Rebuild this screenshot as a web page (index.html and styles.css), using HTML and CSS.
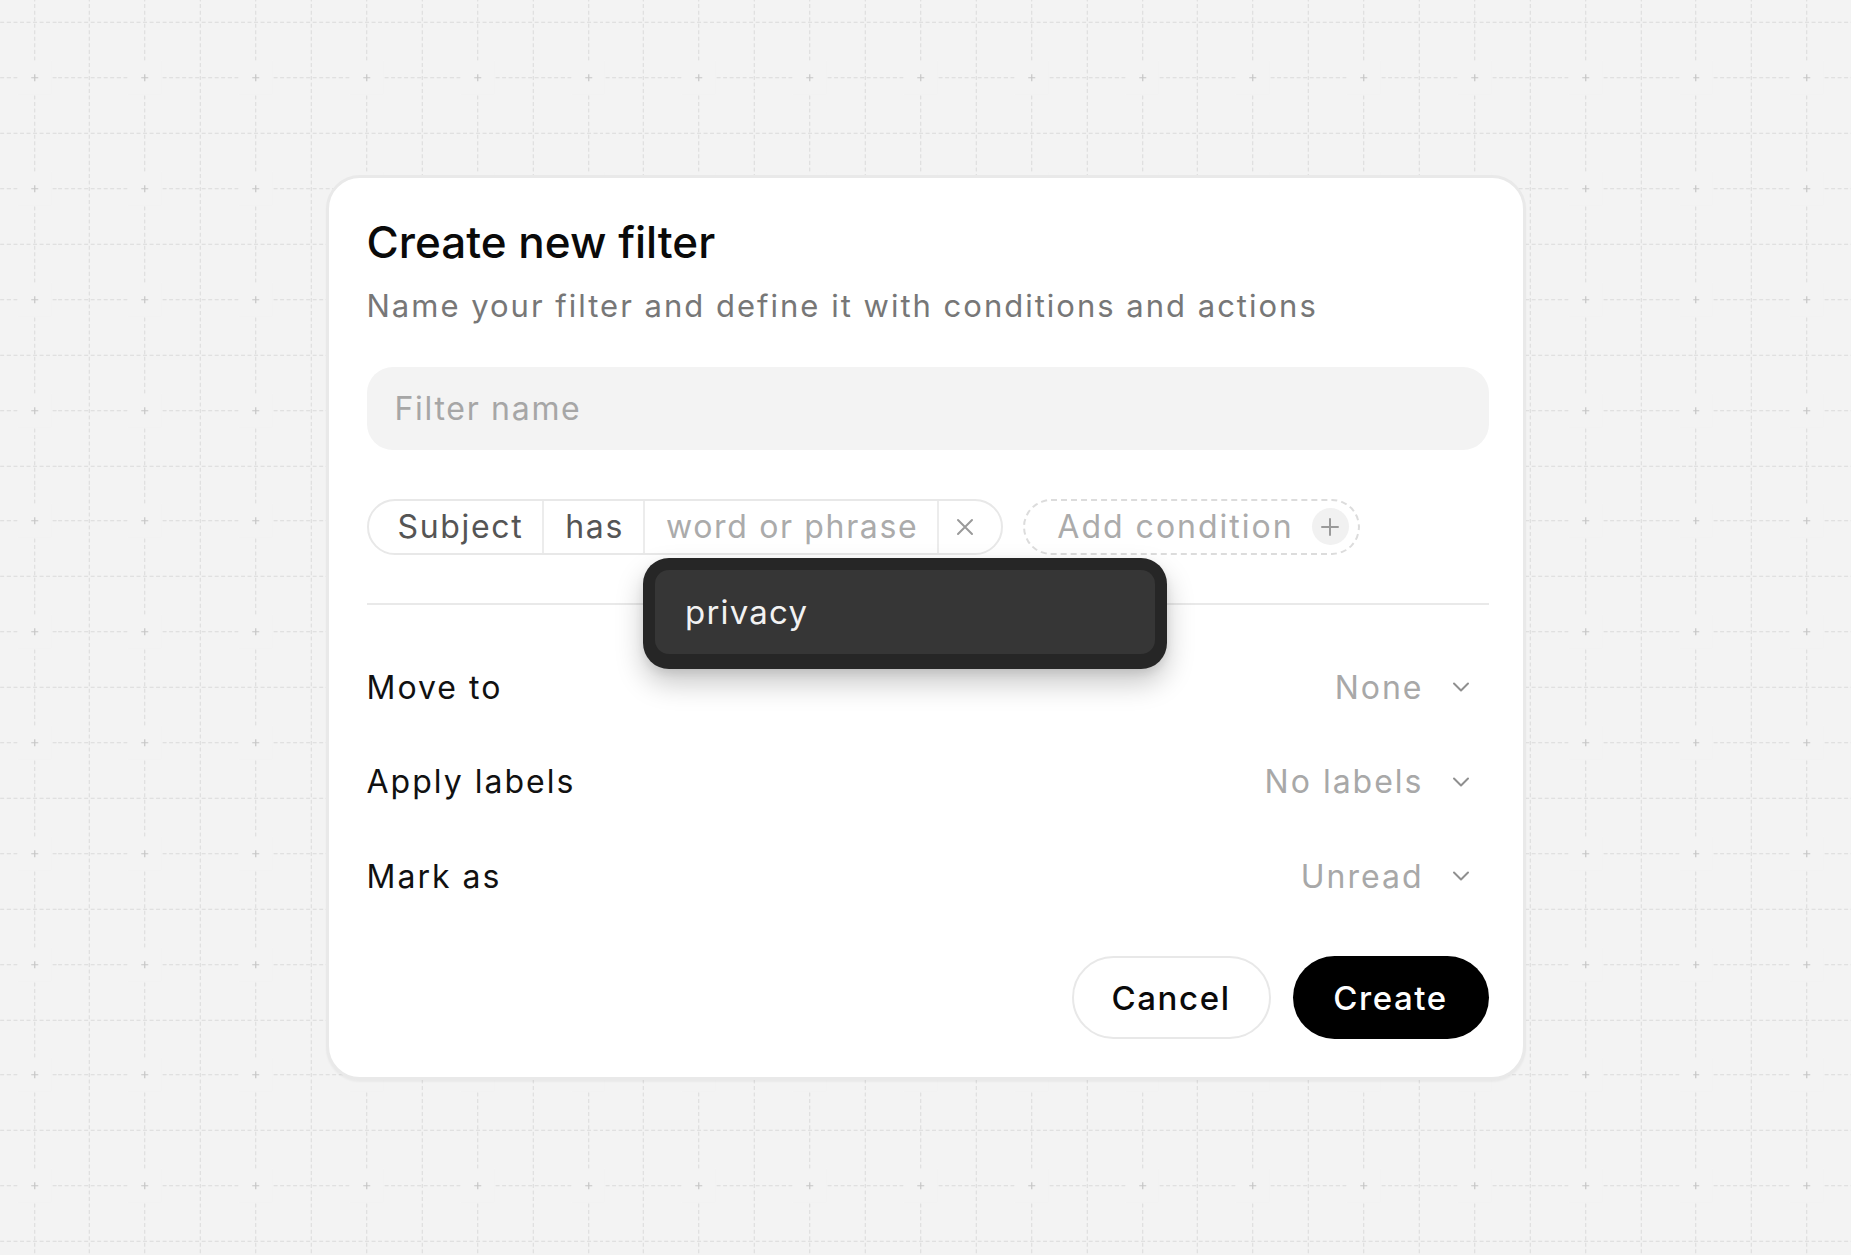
FILE: index.html
```html
<!DOCTYPE html>
<html lang="en">
<head>
<meta charset="utf-8">
<title>Create new filter</title>
<link rel="stylesheet" href="styles.css">
</head>
<body>
<main class="stage">
  <section class="card">
    <h1 class="title">Create new filter</h1>
    <p class="subtitle">Name your filter and define it with conditions and actions</p>
    <div class="name-input">Filter name</div>

    <div class="conditions">
      <div class="chip-group">
        <span class="seg seg-field">Subject</span>
        <span class="seg seg-op">has</span>
        <span class="seg seg-value">word or phrase
          <div class="suggest">
            <div class="suggest-item">privacy</div>
          </div>
        </span>
        <span class="seg seg-remove">
          <svg width="22" height="22" viewBox="0 0 22 22"><path d="M4 4 L18 18 M18 4 L4 18" stroke="#9a9a9a" stroke-width="2" stroke-linecap="round" fill="none"/></svg>
        </span>
      </div>
      <div class="add-cond">
        <span class="add-label">Add condition</span>
        <span class="plus">
          <svg width="20" height="20" viewBox="0 0 20 20"><path d="M10 2 V18 M2 10 H18" stroke="#9a9a9a" stroke-width="2" stroke-linecap="round" fill="none"/></svg>
        </span>
      </div>
    </div>

    <div class="sep"></div>

    <div class="actions">
      <div class="row">
        <span class="row-label">Move to</span>
        <span class="row-value">None
          <svg class="chev" width="18" height="10" viewBox="0 0 18 10"><path d="M2 1.5 L9 8.5 L16 1.5" stroke="#8f8f8f" stroke-width="2" stroke-linecap="round" stroke-linejoin="round" fill="none"/></svg>
        </span>
      </div>
      <div class="row">
        <span class="row-label">Apply labels</span>
        <span class="row-value">No labels
          <svg class="chev" width="18" height="10" viewBox="0 0 18 10"><path d="M2 1.5 L9 8.5 L16 1.5" stroke="#8f8f8f" stroke-width="2" stroke-linecap="round" stroke-linejoin="round" fill="none"/></svg>
        </span>
      </div>
      <div class="row">
        <span class="row-label">Mark as</span>
        <span class="row-value">Unread
          <svg class="chev" width="18" height="10" viewBox="0 0 18 10"><path d="M2 1.5 L9 8.5 L16 1.5" stroke="#8f8f8f" stroke-width="2" stroke-linecap="round" stroke-linejoin="round" fill="none"/></svg>
        </span>
      </div>
    </div>

    <div class="footer">
      <button class="btn btn-cancel">Cancel</button>
      <button class="btn btn-create">Create</button>
    </div>
  </section>
</main>
</body>
</html>
```
FILE: styles.css
```css
* { box-sizing: border-box; }

html, body {
  margin: 0;
  padding: 0;
}

body {
  font-family: "Inter", "Noto Sans", sans-serif;
  background-color: #f3f3f3;
  background-image: url("data:image/svg+xml;utf8,<svg xmlns='http://www.w3.org/2000/svg' width='110.8' height='110.8' viewBox='0 0 110.8 110.8'><g stroke='%23dadada' stroke-width='1' stroke-dasharray='4 2.5' fill='none'><path d='M27.7 0 V110.8 M83.1 0 V110.8 M0 27.7 H110.8 M0 83.1 H110.8'/></g><rect x='10.7' y='10.7' width='34' height='34' fill='%23f3f3f3'/><path d='M24.2 27.7 H31.2 M27.7 24.2 V31.2' stroke='%23c6c6c6' stroke-width='1.2' fill='none'/></svg>");
  background-size: 110.8px 110.8px;
  background-position: 6.6px 50.3px;
}

.stage {
  min-height: 1255px;
  display: flex;
  align-items: center;
  justify-content: center;
}

.card {
  width: 1200px;
  background: #ffffff;
  border: 3px solid #e9e9e9;
  border-radius: 34px;
  padding: 38px 34px 38px 38px;
  box-shadow: 0 2px 2px rgba(0, 0, 0, 0.04);
}

.title {
  margin: 0;
  font-size: 44px;
  line-height: 53px;
  font-weight: 500;
  color: #0a0a0a;
  letter-spacing: 0;
}

.subtitle {
  margin: 19px 0 0;
  font-size: 31px;
  line-height: 36px;
  font-weight: 400;
  color: #777777;
  letter-spacing: 2px;
}

.name-input {
  margin-top: 43px;
  height: 83px;
  border-radius: 26px;
  background: #f3f3f3;
  display: flex;
  align-items: center;
  padding-left: 28px;
  font-size: 32px;
  letter-spacing: 1.7px;
  color: #a6a6a6;
}

.conditions {
  margin-top: 49px;
  display: flex;
  align-items: center;
  gap: 20px;
}

.chip-group {
  height: 56px;
  display: flex;
  align-items: stretch;
  border: 2px solid #e8e8e8;
  border-radius: 28px;
  font-size: 32px;
  letter-spacing: 1.65px;
}

.seg {
  display: flex;
  align-items: center;
  padding: 0 19px 0 21px;
  border-left: 2px solid #ececec;
}

.seg-field {
  border-left: none;
  padding-left: 29px;
  padding-right: 19px;
  color: #555555;
}

.seg-op {
  color: #555555;
}

.seg-value {
  position: relative;
  color: #ababab;
}

.seg-remove {
  padding: 0 25px 0 15px;
}

.seg-remove svg { display: block; }

.suggest {
  position: absolute;
  left: -2px;
  top: calc(100% + 5px);
  width: 524px;
  padding: 12px 12px 15px;
  background: #262626;
  border-radius: 26px;
  box-shadow: 0 14px 28px rgba(0, 0, 0, 0.22), 0 4px 8px rgba(0, 0, 0, 0.08);
  z-index: 5;
  letter-spacing: 1.2px;
}

.suggest-item {
  height: 84px;
  background: #363636;
  border-radius: 14px;
  display: flex;
  align-items: center;
  padding-left: 30px;
  font-size: 33px;
  color: #f2f2f2;
}

.add-cond {
  height: 56px;
  display: flex;
  align-items: center;
  border: 2px dashed #dcdcdc;
  border-radius: 28px;
  padding: 0 9px 0 32px;
  gap: 18px;
  font-size: 32px;
  letter-spacing: 2px;
  color: #ababab;
}

.plus {
  width: 37px;
  height: 37px;
  border-radius: 50%;
  background: #f1f1f1;
  display: flex;
  align-items: center;
  justify-content: center;
}

.plus svg { display: block; }

.sep {
  margin-top: 48px;
  height: 2px;
  background: #e9e9e9;
}

.actions {
  margin-top: 35px;
}

.row {
  height: 94.5px;
  display: flex;
  align-items: center;
  justify-content: space-between;
  padding-right: 19px;
  font-size: 32px;
  letter-spacing: 2px;
}

.row-label {
  color: #111111;
}

.row-value {
  display: flex;
  align-items: center;
  gap: 28px;
  color: #a8a8a8;
}

.chev { display: block; }

.footer {
  margin-top: 33px;
  display: flex;
  justify-content: flex-end;
  gap: 22px;
}

.btn {
  height: 83px;
  border-radius: 42px;
  font-family: "Inter", "Noto Sans", sans-serif;
  font-size: 33px;
  font-weight: 500;
  letter-spacing: 1.6px;
  cursor: pointer;
}

.btn-cancel {
  width: 199px;
  background: #ffffff;
  border: 2px solid #e8e8e8;
  color: #0a0a0a;
}

.btn-create {
  width: 196px;
  background: #000000;
  border: none;
  color: #ffffff;
}
```
